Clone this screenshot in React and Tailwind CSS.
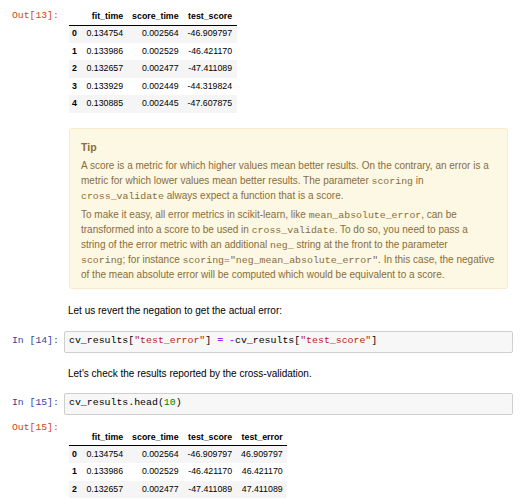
import React from 'react';

const mono = { fontFamily: '"Liberation Mono", "DejaVu Sans Mono", monospace' };

const Table = ({ cols, rows }) => (
  <table className="border-collapse text-[8.8px] text-black" style={{ fontFamily: '"Liberation Sans", Arial, sans-serif' }}>
    <thead>
      <tr className="border-b border-black h-[16px]">
        <th className="px-[4px]"></th>
        {cols.map((c) => (
          <th key={c} className="px-[4.5px] text-right font-bold">{c}</th>
        ))}
      </tr>
    </thead>
    <tbody>
      {rows.map((r, i) => (
        <tr key={i} className={`h-[17.5px] ${i % 2 === 0 ? 'bg-[#f5f5f5]' : 'bg-white'}`}>
          <th className="pl-[3px] pr-[5px] text-left font-bold">{i}</th>
          {r.map((v, j) => (
            <td key={j} className="px-[4.5px] text-right">{v}</td>
          ))}
        </tr>
      ))}
    </tbody>
  </table>
);

const Code = ({ children }) => <code className="text-[9.9px] leading-none text-[#8a6d3b]" style={mono}>{children}</code>;

const App = () => {
  return (
    <div className="w-[524px] h-[500px] overflow-hidden bg-white" style={{ fontFamily: '"Liberation Sans", Arial, sans-serif' }}>
      {/* Out[13] */}
      <div className="flex pt-[9px]">
        <div className="w-[64px] pl-[12px] text-[9.75px] text-[#d84315]" style={mono}>Out[13]:</div>
        <div className="pl-[5px]">
          <Table
            cols={['fit_time', 'score_time', 'test_score']}
            rows={[
              ['0.134754', '0.002564', '-46.909797'],
              ['0.133986', '0.002529', '-46.421170'],
              ['0.132657', '0.002477', '-47.411089'],
              ['0.133929', '0.002449', '-44.319824'],
              ['0.130885', '0.002445', '-47.607875'],
            ]}
          />
        </div>
      </div>

      {/* Tip */}
      <div className="ml-[69px] mr-[16px] mt-[15px] rounded-[3px] border border-[#faebcc] bg-[#fcf8e3] px-[11px] pt-[11px] pb-[6px] text-[10px] leading-[15px] text-[#8a6d3b]">
        <p className="font-bold text-[10.5px] mb-[3px]">Tip</p>
        <p className="whitespace-nowrap">
          A score is a metric for which higher values mean better results. On the contrary, an error is a<br />
          metric for which lower values mean better results. The parameter <Code>scoring</Code> in<br />
          <Code>cross_validate</Code> always expect a function that is a score.
        </p>
        <p className="whitespace-nowrap mt-[4px]">
          To make it easy, all error metrics in scikit-learn, like <Code>mean_absolute_error</Code>, can be<br />
          transformed into a score to be used in <Code>cross_validate</Code>. To do so, you need to pass a<br />
          string of the error metric with an additional <Code>neg_</Code> string at the front to the parameter<br />
          <Code>scoring</Code>; for instance <Code>scoring="neg_mean_absolute_error"</Code>. In this case, the negative<br />
          of the mean absolute error will be computed which would be equivalent to a score.
        </p>
      </div>

      <p className="pl-[68px] mt-[14px] text-[10px] text-black">Let us revert the negation to get the actual error:</p>

      {/* In [14] */}
      <div className="flex items-center mt-[13px]">
        <div className="w-[64px] pl-[12px] text-[9.75px] text-[#303f9f]" style={mono}>In [14]:</div>
        <div className="w-[449px] h-[22px] flex items-center px-[4px] border border-[#cfcfcf] rounded-[2px] bg-[#f7f7f7] text-[9.9px] text-black whitespace-nowrap" style={mono}>
          cv_results[<span className="text-[#ba2121]">"test_error"</span>]&nbsp;<span className="text-[#aa22ff] font-bold">=</span>&nbsp;<span className="text-[#aa22ff] font-bold">-</span>cv_results[<span className="text-[#ba2121]">"test_score"</span>]
        </div>
      </div>

      <p className="pl-[68px] mt-[13px] text-[10px] text-black">Let's check the results reported by the cross-validation.</p>

      {/* In [15] */}
      <div className="flex items-center mt-[12px]">
        <div className="w-[64px] pl-[12px] text-[9.75px] text-[#303f9f]" style={mono}>In [15]:</div>
        <div className="w-[449px] h-[22px] flex items-center px-[4px] border border-[#cfcfcf] rounded-[2px] bg-[#f7f7f7] text-[9.9px] text-black whitespace-nowrap" style={mono}>
          cv_results.head(<span className="text-[#008000]">10</span>)
        </div>
      </div>

      {/* Out[15] */}
      <div className="flex pt-[3px]">
        <div className="w-[64px] pl-[12px] pt-[3px] text-[9.75px] text-[#d84315]" style={mono}>Out[15]:</div>
        <div className="pl-[5px] pt-[12px]">
          <Table
            cols={['fit_time', 'score_time', 'test_score', 'test_error']}
            rows={[
              ['0.134754', '0.002564', '-46.909797', '46.909797'],
              ['0.133986', '0.002529', '-46.421170', '46.421170'],
              ['0.132657', '0.002477', '-47.411089', '47.411089'],
            ]}
          />
        </div>
      </div>
    </div>
  );
};

export default App;
